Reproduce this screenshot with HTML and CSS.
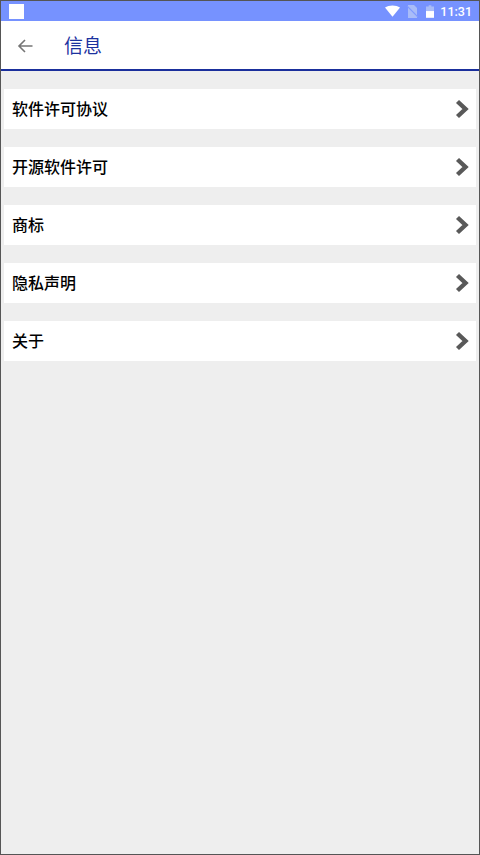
FILE: index.html
```html
<!DOCTYPE html>
<html lang="zh-CN">
<head>
    <meta charset="UTF-8">
    <title>信息</title>
    <link rel="stylesheet" href="styles.css">
</head>
<body>
    <div class="screen">
        <div class="status-bar">
            <div class="app-icon"></div>
            <div class="status-right">
                <svg class="icon-wifi" width="15" height="12" viewBox="0 0 16 12"><path d="M0 2.200C2 .8 5 0 8 0s6 .8 8 2.200L8 12z" fill="#fff"/></svg>
                <svg class="icon-sim" width="11" height="13" viewBox="0 0 11 13"><path d="M1 0h6l3 3v10H1z" fill="#a9bcf8"/><path d="M0 1l11 11" stroke="#7f9aff" stroke-width="1.200"/></svg>
                <svg class="icon-battery" width="8" height="13" viewBox="0 0 9 14"><path d="M3 0h3v1.500h3V14H0V1.500h3z" fill="#a9bcf8"/><path d="M0 6.500h9V14H0z" fill="#fff"/></svg>
                <span class="clock">11:31</span>
            </div>
        </div>
        <div class="header">
            <svg class="back" width="16" height="14" viewBox="0 0 16 14"><path d="M15.500 7H2M8 1L2 7l6 6" fill="none" stroke="#757575" stroke-width="1.600"/></svg>
            <h1>信息</h1>
        </div>
        <div class="list">
            <div class="row"><span>软件许可协议</span><svg class="chev" width="14" height="20" viewBox="0 0 14 20"><path d="M2.500 2.500L10.500 10l-8 7.500" fill="none" stroke="#595959" stroke-width="4.400"/></svg></div>
            <div class="row"><span>开源软件许可</span><svg class="chev" width="14" height="20" viewBox="0 0 14 20"><path d="M2.500 2.500L10.500 10l-8 7.500" fill="none" stroke="#595959" stroke-width="4.400"/></svg></div>
            <div class="row"><span>商标</span><svg class="chev" width="14" height="20" viewBox="0 0 14 20"><path d="M2.500 2.500L10.500 10l-8 7.500" fill="none" stroke="#595959" stroke-width="4.400"/></svg></div>
            <div class="row"><span>隐私声明</span><svg class="chev" width="14" height="20" viewBox="0 0 14 20"><path d="M2.500 2.500L10.500 10l-8 7.500" fill="none" stroke="#595959" stroke-width="4.400"/></svg></div>
            <div class="row"><span>关于</span><svg class="chev" width="14" height="20" viewBox="0 0 14 20"><path d="M2.500 2.500L10.500 10l-8 7.500" fill="none" stroke="#595959" stroke-width="4.400"/></svg></div>
        </div>
    </div>
</body>
</html>
```
FILE: styles.css
```css
* {
    margin: 0;
    padding: 0;
    box-sizing: border-box;
}

html, body {
    width: 480px;
    height: 855px;
    overflow: hidden;
}

body {
    font-family: "Noto Sans CJK SC", "Noto Sans", sans-serif;
}

.screen {
    width: 480px;
    height: 855px;
    display: flex;
    flex-direction: column;
    background-color: #eee;
    border: 1px solid #555;
}

.status-bar {
    height: 20px;
    flex-shrink: 0;
    display: flex;
    justify-content: space-between;
    align-items: center;
    padding: 0 7px 0 8px;
    background-color: #7692ff;
}

.app-icon {
    width: 15px;
    height: 15px;
    background-color: #fff;
}

.status-right {
    display: flex;
    align-items: center;
}

.icon-wifi {
    margin-right: 7px;
}

.icon-sim {
    margin-right: 8px;
}

.icon-battery {
    margin-right: 6px;
}

.clock {
    font-family: Roboto, sans-serif;
    font-size: 12.5px;
    font-weight: 500;
    color: #fff;
}

.header {
    height: 50px;
    flex-shrink: 0;
    display: flex;
    align-items: center;
    padding-left: 16px;
    background-color: #fff;
    border-bottom: 2px solid #1a2f9c;
}

.back {
    margin-top: 2px;
}

.header h1 {
    margin: 0 0 1px 31px;
    font-size: 19px;
    font-weight: 400;
    color: #1c329f;
}

.list {
    padding: 18px 3px 0;
    display: flex;
    flex-direction: column;
    gap: 18px;
}

.row {
    height: 40px;
    display: flex;
    justify-content: space-between;
    align-items: center;
    padding: 0 7px 0 8px;
    background-color: #fff;
}

.row span {
    margin-bottom: 3px;
    font-size: 16px;
    font-weight: 500;
    color: #000;
}
```
